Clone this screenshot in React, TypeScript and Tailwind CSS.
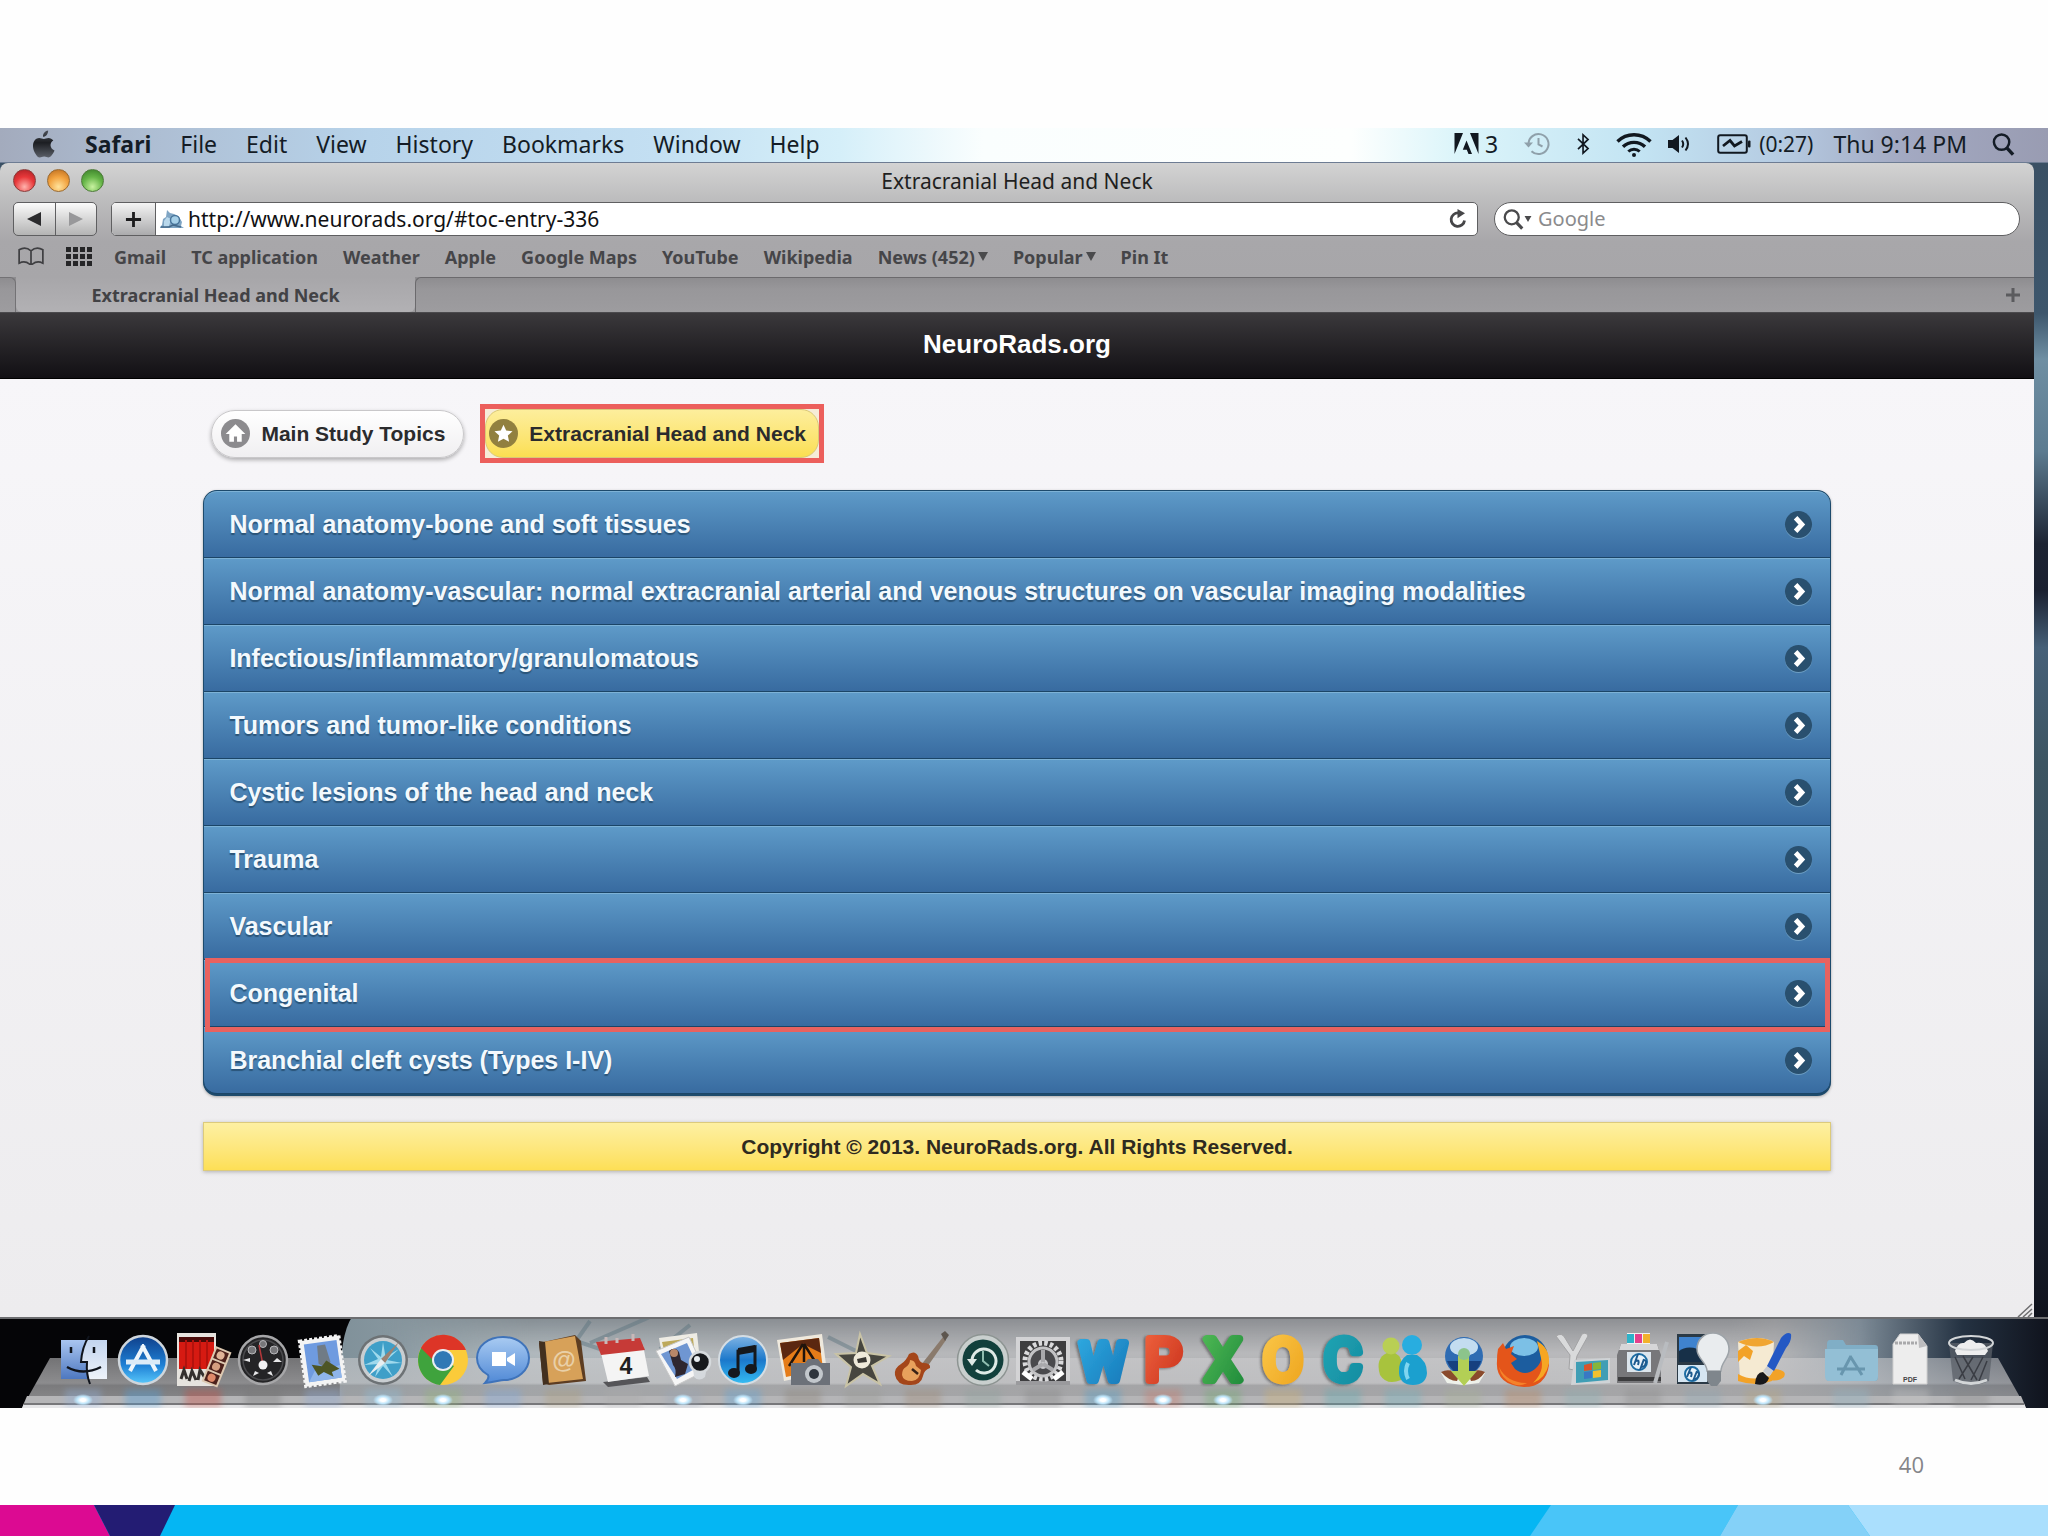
import React from "react";

const menuItems = ["File", "Edit", "View", "History", "Bookmarks", "Window", "Help"];

const bookmarks = [
  { label: "Gmail" },
  { label: "TC application" },
  { label: "Weather" },
  { label: "Apple" },
  { label: "Google Maps" },
  { label: "YouTube" },
  { label: "Wikipedia" },
  { label: "News (452)", menu: true },
  { label: "Popular", menu: true },
  { label: "Pin It" },
];

const topics = [
  "Normal anatomy-bone and soft tissues",
  "Normal anatomy-vascular: normal extracranial arterial and venous structures on vascular imaging modalities",
  "Infectious/inflammatory/granulomatous",
  "Tumors and tumor-like conditions",
  "Cystic lesions of the head and neck",
  "Trauma",
  "Vascular",
  "Congenital",
  "Branchial cleft cysts (Types I-IV)",
];

/* ---------- menu bar ---------- */

function AppleIcon() {
  return (
    <svg viewBox="0 0 24 28" className="h-[28px] w-[25px]" aria-hidden="true">
      <defs>
        <linearGradient id="apple" x1="0" y1="0" x2="0" y2="1">
          <stop offset="0" stopColor="#4c5058" />
          <stop offset=".45" stopColor="#1c1e22" />
          <stop offset="1" stopColor="#5a5f68" />
        </linearGradient>
      </defs>
      <path
        fill="url(#apple)"
        d="M16.6 0.6c.2 1.700-.5 3.200-1.400 4.300-1 1.100-2.400 1.900-3.700 1.800-.2-1.600.6-3.200 1.400-4.200 1-1.100 2.500-1.900 3.700-1.900zM23 20.400c-.6 1.500-.9 2.100-1.700 3.400-1.100 1.700-2.500 3.700-4.300 3.700-1.600 0-2.100-1-4.300-1s-2.800 1-4.400 1c-1.800 0-3.200-1.900-4.200-3.600C1.100 19.300.800 14 2.600 11.200c1.200-2 3.200-3.100 5.100-3.100s3.100 1 4.700 1c1.500 0 2.500-1 4.700-1 1.700 0 3.500.9 4.700 2.500-4.100 2.300-3.500 8.200 1.200 9.800z"
      />
    </svg>
  );
}

function AdobeIcon() {
  return (
    <svg viewBox="0 0 24 22" className="h-[22px] w-[25px]" fill="#111820" aria-hidden="true">
      <path d="M0 0h8.500L0 21zM24 0h-8.500L24 21zM12 7.500L17.500 21H14l-1.700-4.300H8.300z" />
    </svg>
  );
}

function TimeMachineIcon() {
  return (
    <svg viewBox="0 0 28 24" className="h-[24px] w-[28px]" fill="none" stroke="#8fa0aa" strokeWidth="2" aria-hidden="true">
      <path d="M5.500 12a10 10 0 1 1 3 7.200" />
      <path d="M15.500 6v6.500l4 2" />
      <path d="M1 10.500h9l-4.500 5z" fill="#8fa0aa" stroke="none" />
    </svg>
  );
}

function BluetoothIcon() {
  return (
    <svg viewBox="0 0 16 24" className="h-[22px] w-[15px]" fill="none" stroke="#111820" strokeWidth="1.800" aria-hidden="true">
      <path d="M2 6.500l11 10.500-5.500 5V2L13 7 2 17.500" />
    </svg>
  );
}

function WifiIcon() {
  return (
    <svg viewBox="0 0 36 25" className="h-[25px] w-[36px]" fill="none" stroke="#111820" strokeWidth="3.400" aria-hidden="true">
      <path d="M1.500 9.500a23.500 23.500 0 0 1 33 0" />
      <path d="M7 14.800a15.800 15.800 0 0 1 22 0" />
      <path d="M12.300 19.500a8.500 8.500 0 0 1 11.400 0" strokeWidth="3" />
      <circle cx="18" cy="23" r="2" fill="#111820" stroke="none" />
    </svg>
  );
}

function VolumeIcon() {
  return (
    <svg viewBox="0 0 24 20" className="h-[20px] w-[24px]" fill="none" stroke="#111820" strokeWidth="2" aria-hidden="true">
      <path d="M0 6h4.500L11 1v18l-6.500-5H0z" fill="#111820" stroke="none" />
      <path d="M14 6.500q2.500 3.500 0 7M17.500 3.500q5 6.500 0 13" />
    </svg>
  );
}

function BatteryIcon() {
  return (
    <svg viewBox="0 0 34 20" className="h-[20px] w-[34px]" fill="none" stroke="#111820" aria-hidden="true">
      <rect x="1.200" y="1.200" width="28.600" height="17.600" rx="2" strokeWidth="2" />
      <rect x="31" y="6.500" width="2.500" height="7" rx="1" fill="#111820" stroke="none" />
      <path d="M6 12l7-5.500 4.500 5.500L25 7.500" strokeWidth="2.800" />
    </svg>
  );
}

function SearchIcon({ className }: { className: string }) {
  return (
    <svg viewBox="0 0 24 24" className={className} fill="none" stroke="currentColor" strokeWidth="2.600" aria-hidden="true">
      <circle cx="10" cy="9.500" r="8" />
      <path d="M15 15l7 7.500" strokeWidth="3.600" />
    </svg>
  );
}

function MenuBar() {
  return (
    <header className="flex h-[35px] items-center justify-between border-b border-[#6d7c93] bg-[linear-gradient(90deg,#a3abbd_0%,#adbdd2_7%,#b7d3ea_18%,#c3dff2_32%,#d5eff9_41%,#fafefe_48%,#fdfffe_66%,#dcf5fa_71%,#c3e4f3_80%,#b5cbe2_87%,#a3a9c2_93%,#999cb2_100%)] pb-0.5 pl-[31px] pr-[33px] text-[23px] leading-8 text-[#141c26]">
      <nav className="flex items-center gap-[29px]" aria-label="Menu bar">
        <button aria-label="Apple menu">
          <AppleIcon />
        </button>
        <button className="font-bold">Safari</button>
        {menuItems.map((m) => (
          <button key={m}>{m}</button>
        ))}
      </nav>
      <div className="flex items-center gap-[25px]">
        <button className="flex items-center gap-1.5">
          <AdobeIcon />
          <span>3</span>
        </button>
        <TimeMachineIcon />
        <BluetoothIcon />
        <span className="flex items-center gap-4">
          <WifiIcon />
          <VolumeIcon />
        </span>
        <span className="flex items-center gap-5">
          <span className="flex items-center gap-2 text-[21px]">
            <BatteryIcon />
            (0:27)
          </span>
          <time>Thu 9:14 PM</time>
        </span>
        <button aria-label="Spotlight">
          <SearchIcon className="size-[23px]" />
        </button>
      </div>
    </header>
  );
}

/* ---------- browser chrome ---------- */

function Favicon() {
  return (
    <svg viewBox="0 0 24 20" className="h-[20px] w-[24px] shrink-0" aria-hidden="true">
      <path d="M0 18l2-2 1-6 3-2 1-7 3 3 4 1 5 3 3 5-1 4 3 2H0z" fill="#7fa5c4" />
      <path d="M4 12l3-4 4 2-2 7-5 1z" fill="#b9d8ec" />
      <circle cx="15" cy="11" r="4.500" fill="#a7d0e8" stroke="#49759b" strokeWidth="1.500" />
      <path d="M1 18h8l4-2 8 2" stroke="#456a8b" strokeWidth="1.500" fill="none" />
    </svg>
  );
}

function Toolbar() {
  return (
    <div className="flex items-center pl-[13px] pr-[14px]">
      <div className="flex h-[34px] w-[84px] overflow-hidden rounded-[5px] border border-[#5f5f61] bg-gradient-to-b from-[#fbfbfb] to-[#b4b4b4]">
        <button aria-label="Back" className="flex flex-1 items-center justify-center border-r border-[#5f5f61]">
          <svg viewBox="0 0 14 14" className="size-[14px]" aria-hidden="true">
            <path d="M14 0v14L0 7z" fill="#2b2b2d" />
          </svg>
        </button>
        <button aria-label="Forward" className="flex flex-1 items-center justify-center">
          <svg viewBox="0 0 14 14" className="size-[14px]" aria-hidden="true">
            <path d="M0 0v14l14-7z" fill="#98989a" />
          </svg>
        </button>
      </div>
      <div className="ml-[14px] flex h-[34px] flex-1 items-center overflow-hidden rounded-[5px] border border-[#5f5f61] bg-white">
        <button
          aria-label="Add bookmark"
          className="flex h-full w-[44px] items-center justify-center border-r border-[#5f5f61] bg-gradient-to-b from-[#f4f4f4] to-[#ababad]"
        >
          <svg viewBox="0 0 18 18" className="size-[17px]" aria-hidden="true">
            <path d="M9 1v16M1 9h16" stroke="#1c1c1e" strokeWidth="3" />
          </svg>
        </button>
        <div className="flex min-w-0 flex-1 items-center gap-1 pl-1">
          <Favicon />
          <input
            aria-label="Address"
            className="min-w-0 flex-1 bg-transparent text-[21px] leading-8 text-[#111113] outline-none"
            defaultValue="http://www.neurorads.org/#toc-entry-336"
          />
        </div>
        <button aria-label="Reload" className="mr-[10px] text-[#464648]">
          <svg viewBox="0 0 18 20" className="h-[20px] w-[18px]" fill="none" stroke="currentColor" strokeWidth="2.800" aria-hidden="true">
            <path d="M15.500 11.500a6.700 6.700 0 1 1-6-7.500" />
            <path d="M8.500 0l7.500 4.200-7.500 5z" fill="currentColor" stroke="none" />
          </svg>
        </button>
      </div>
      <div className="ml-[16px] flex h-[34px] w-[526px] items-center rounded-full border border-[#5f5f61] bg-white pl-[8px] text-[#4a4a4c]">
        <SearchIcon className="size-[21px]" />
        <svg viewBox="0 0 8 7" className="h-[6px] w-[8px]" aria-hidden="true">
          <path d="M0 0h8L4 7z" fill="currentColor" />
        </svg>
        <input
          aria-label="Search Google"
          className="ml-1.5 min-w-0 flex-1 bg-transparent text-xl leading-8 outline-none placeholder:text-[#8b8b8d]"
          placeholder="Google"
        />
      </div>
    </div>
  );
}

function BookmarksBar() {
  return (
    <nav className="flex h-[41px] items-center pl-[17px] text-lg font-bold text-[#454548]" aria-label="Bookmarks">
      <button aria-label="Show all bookmarks">
        <svg viewBox="0 0 28 20" className="h-[19px] w-[28px]" fill="none" stroke="#3f3f42" strokeWidth="1.800" aria-hidden="true">
          <path d="M14 4Q8-1 1.500 3v14q6-3 11 1h3q5-4 11-1V3Q20-1 14 4zM14 4v14" />
        </svg>
      </button>
      <button aria-label="Top sites" className="ml-[21px] grid grid-cols-4 gap-x-[2px] gap-y-[2px]">
        {Array.from({ length: 12 }, (_, i) => (
          <span key={i} className="h-[5px] w-[5px] bg-[#252527]" />
        ))}
      </button>
      <div className="ml-[22px] flex gap-[25px]">
        {bookmarks.map((b) => (
          <a key={b.label} href="#bookmark" className="flex items-center gap-[3px]">
            {b.label}
            {b.menu && (
              <svg viewBox="0 0 10 9" className="h-[9px] w-[10px]" aria-hidden="true">
                <path d="M0 0h10L5 9z" fill="#4a4a4c" />
              </svg>
            )}
          </a>
        ))}
      </div>
    </nav>
  );
}

function TabBar() {
  return (
    <div className="flex h-[35px] bg-[linear-gradient(180deg,#8d8c8f_0%,#98979a_35%,#9d9c9f_100%)]">
      <div className="w-[16px] rounded-tr-[6px] border-r border-t border-[#737275]" />
      <button className="w-[399px] rounded-b-[6px] bg-gradient-to-b from-[#a7a6a9] to-[#b2b1b4] text-lg font-bold text-[#424245]">
        Extracranial Head and Neck
      </button>
      <div className="flex flex-1 items-center justify-end rounded-tl-[6px] border-l border-t border-[#6b6a6d] pr-[14px]">
        <button aria-label="New tab">
          <svg viewBox="0 0 14 14" className="size-[14px]" aria-hidden="true">
            <path d="M7 0v14M0 7h14" stroke="#5b5b5e" strokeWidth="3" />
          </svg>
        </button>
      </div>
    </div>
  );
}

/* ---------- web page ---------- */

function Site() {
  return (
    <div className="font-['Liberation_Sans',Arial,sans-serif] font-bold">
      <div className="flex h-[67px] items-center justify-center border-b border-t border-t-[#4b4a4d] border-b-black bg-gradient-to-b from-[#3b393c] to-[#121014]">
        <h1 className="pb-1 text-[26px] leading-8 text-white">NeuroRads.org</h1>
      </div>
      <main className="relative min-h-[938px] bg-gradient-to-b from-[#f7f6f9] to-[#edecee] px-[10%] pt-[25px]">
        <div className="flex items-center gap-[16px] pl-2 text-[21px] text-[#2b2b2d]">
          <button className="flex h-[48px] items-center gap-[11px] rounded-full border border-[#c9c8ca] bg-gradient-to-b from-white to-[#f0eff1] pl-[9px] pr-[18px] shadow-[0_2px_4px_rgba(0,0,0,0.3)]">
            <svg viewBox="0 0 28 28" className="size-[29px]" aria-hidden="true">
              <circle cx="14" cy="14" r="14" fill="#8c8b8e" />
              <path d="M14 5L4.500 14.500H8V22h4.500v-5h3v5H20v-7.500h3.500z" fill="#fff" />
            </svg>
            Main Study Topics
          </button>
          <div className="border-[5px] border-[#ec5f5c] bg-[#f6ecd8]">
            <button className="flex h-[49px] items-center gap-[11px] rounded-[18px] border border-[#d9c878] bg-gradient-to-b from-[#fdee9c] to-[#fbdf50] pl-[3px] pr-[12px]">
              <svg viewBox="0 0 28 28" className="size-[29px]" aria-hidden="true">
                <circle cx="14" cy="14" r="14" fill="#91803f" />
                <path d="M14 5.500l2.600 5.600 6.100.7-4.500 4.200 1.200 6-5.400-3-5.400 3 1.200-6-4.500-4.200 6.100-.7z" fill="#fff" />
              </svg>
              Extracranial Head and Neck
            </button>
          </div>
        </div>
        <ul className="mt-[27px] rounded-[14px] border border-b-2 border-[#1d4a6c] bg-[#1d4a6c] text-[25px] text-[#f3f9fd] shadow-[0_1px_3px_rgba(0,0,0,0.3)]">
          {topics.map((t) => (
            <li key={t} className="group relative">
              <a
                href="#topic"
                className="flex h-[67px] items-center justify-between border-b border-t border-b-[#1b4567] border-t-[#7db2d6] bg-gradient-to-b from-[#5e9ac8] to-[#386ba0] pl-[25px] pr-[17px] text-shadow-[0_2px_1px_#2a5478] group-first:rounded-t-[13px] group-last:rounded-b-[13px]"
              >
                <span>{t}</span>
                <svg viewBox="0 0 30 30" className="size-[29px]" aria-hidden="true">
                  <circle cx="15" cy="16" r="14" fill="#6d9ec3" />
                  <circle cx="15" cy="15" r="14" fill="#29506f" />
                  <path d="M12 8l6.500 7-6.500 7" fill="none" stroke="#fff" strokeWidth="5" />
                </svg>
              </a>
              {t === "Congenital" && (
                <span className="pointer-events-none absolute -bottom-[5px] -top-[2px] left-[1px] right-0 z-10 border-[5px] border-[#e8625f]" />
              )}
            </li>
          ))}
        </ul>
        <footer className="mt-[26px] flex h-[49px] items-center justify-center border border-[#dcca7c] bg-gradient-to-b from-[#fdf0a2] to-[#fddf55] text-[21px] text-[#2e2a20] shadow-[0_1px_4px_rgba(0,0,0,0.25)]">
          Copyright © 2013. NeuroRads.org. All Rights Reserved.
        </footer>
        <svg viewBox="0 0 16 14" className="absolute bottom-0 right-0 h-[14px] w-[18px]" aria-hidden="true">
          <path d="M1 14L15 1M6 14l9-8M11 14l4-4" stroke="#6e6e70" strokeWidth="1.500" />
        </svg>
      </main>
    </div>
  );
}

/* ---------- dock ---------- */

const letterStyle = { fontFamily: "'Liberation Sans', Arial, sans-serif", fontWeight: 700 } as const;
const roundStyle = { fontFamily: "Roboto, 'Liberation Sans', sans-serif", fontWeight: 400 } as const;

function Letter({ ch, from, to, size = 58 }: { ch: string; from: string; to: string; size?: number }) {
  const id = "letter" + ch;
  return (
    <>
      <defs>
        <linearGradient id={id} x1="0" y1="0" x2="1" y2="1">
          <stop offset="0" stopColor={from} />
          <stop offset="1" stopColor={to} />
        </linearGradient>
        <filter id={id + "s"} x="-20%" y="-20%" width="140%" height="140%">
          <feDropShadow dx="-2" dy="1" stdDeviation="1" floodColor="#333333" floodOpacity=".5" />
        </filter>
      </defs>
      <text
        x="30"
        y="51"
        textAnchor="middle"
        fontSize={size}
        style={roundStyle}
        fill={`url(#${id})`}
        stroke={`url(#${id})`}
        strokeWidth="8"
        strokeLinejoin="round"
        filter={`url(#${id}s)`}
      >
        {ch}
      </text>
    </>
  );
}

function Hp({ x, y, r }: { x: number; y: number; r: number }) {
  return (
    <>
      <circle cx={x} cy={y} r={r} fill="#e9f3fa" stroke="#1d6da3" strokeWidth="2" />
      <path d={`M${x - 1} ${y - r}l-4 ${r + 3}m2-4q4-2 2 4M${x + 5} ${y - 3}l-4 ${r + 3}m3-${r + 2}q5 0 2 5q-2 3-4 1`} fill="none" stroke="#1d5a8e" strokeWidth="2" />
    </>
  );
}

type DockItem = { name: string; tint: string; running?: boolean; art: React.ReactNode };

const apps: DockItem[] = [
  {
    name: "Finder",
    tint: "bg-[#8fb0dd]",
    running: true,
    art: (
      <>
        <defs>
          <linearGradient id="fl" x1="0" y1="0" x2="0" y2="1">
            <stop offset="0" stopColor="#a9c5f0" />
            <stop offset="1" stopColor="#4e78c0" />
          </linearGradient>
          <linearGradient id="fr" x1="0" y1="0" x2="0" y2="1">
            <stop offset="0" stopColor="#c3d5ef" />
            <stop offset="1" stopColor="#eef3fa" />
          </linearGradient>
        </defs>
        <rect x="8" y="11" width="46" height="39" fill="url(#fr)" />
        <path d="M8 11h26q-6 12-6 22h6q0 8 1 17H8z" fill="url(#fl)" />
        <path d="M36 7Q29 18 28 33h6q-1 12 3 22" fill="none" stroke="#10141c" strokeWidth="2" />
        <path d="M14 38q16 9 34 0M18 18v6M41 18v6" fill="none" stroke="#10141c" strokeWidth="2.500" />
      </>
    ),
  },
  {
    name: "App Store",
    tint: "bg-[#4aa0e0]",
    art: (
      <>
        <defs>
          <linearGradient id="as" x1="0" y1="0" x2="0" y2="1">
            <stop offset="0" stopColor="#0f3f8a" />
            <stop offset=".6" stopColor="#1e7fd4" />
            <stop offset="1" stopColor="#58c8fb" />
          </linearGradient>
        </defs>
        <circle cx="30" cy="31" r="24" fill="url(#as)" stroke="#cfd6dc" strokeWidth="2.500" />
        <path d="M31 16L17 42M29 16l14 26" stroke="#eef6fc" strokeWidth="4" />
        <path d="M13 33h34" stroke="#dcebf7" strokeWidth="5" />
      </>
    ),
  },
  {
    name: "Photo Booth",
    tint: "bg-[#d0483c]",
    art: (
      <>
        <rect x="4" y="4" width="39" height="53" fill="#e6e3de" />
        <path d="M6 8h35v32H6z" fill="#d61a12" />
        <path d="M6 8h35v5H6z" fill="#4a0a08" />
        <path d="M13 11v28M20 11v28M27 11v28M34 11v28" stroke="#b3120d" strokeWidth="2" />
        <path d="M8 50l3-9 3 9M16 52l3-10 4 9M25 51l2-10 5 8" stroke="#34302e" strokeWidth="3" fill="none" />
        <g transform="rotate(22 44 38)">
          <rect x="35" y="19" width="17" height="38" fill="#ddc8b0" />
          <path d="M37 21h13v10H37zM37 33h13v10H37zM37 45h13v10H37z" fill="#4d211b" />
          <circle cx="43" cy="26" r="4" fill="#e0b397" />
          <circle cx="43" cy="38" r="4" fill="#d59f80" />
          <circle cx="43" cy="50" r="4" fill="#e08a6a" />
        </g>
      </>
    ),
  },
  {
    name: "Dashboard",
    tint: "bg-[#777777]",
    art: (
      <>
        <circle cx="30" cy="31" r="24" fill="#242426" stroke="#a6a6a8" strokeWidth="2.500" />
        <circle cx="30" cy="31" r="20" fill="none" stroke="#4a4a4d" strokeWidth="1.500" />
        <g fill="#77777a" stroke="#b7b7ba" strokeWidth="1">
          <circle cx="19" cy="21" r="4" />
          <circle cx="41" cy="21" r="4" />
          <circle cx="30" cy="15" r="3.500" />
        </g>
        <path d="M10 31l7-2v4zM20 47l2-5 4 2zM40 47l-2-5-4 2zM40 33l4-4 5 4z" fill="#e6e6e8" />
        <path d="M30 36l-4-20" stroke="#b3373a" strokeWidth="1.500" />
        <circle cx="30" cy="36" r="4.500" fill="#f2f2f4" />
      </>
    ),
  },
  {
    name: "Mail",
    tint: "bg-[#8da9d6]",
    art: (
      <g transform="rotate(-8 30 30)">
        <rect x="9" y="9" width="40" height="46" fill="#f4f4f4" stroke="#f4f4f4" strokeWidth="3" strokeDasharray="3 2" />
        <rect x="13" y="13" width="33" height="38" fill="#6f9be0" />
        <path d="M13 51l9-13 12 3 12-3v13z" fill="#8fb5ea" />
        <path d="M26 16h8l3 18-5 6-7-6z" fill="#707b86" />
        <path d="M18 34l10 3 5-5 12 10-8 2 1 5-9-6-6 3z" fill="#4d5524" />
      </g>
    ),
  },
  {
    name: "Safari",
    tint: "bg-[#8cbcd8]",
    running: true,
    art: (
      <>
        <circle cx="30" cy="31" r="25" fill="#6d7275" />
        <circle cx="30" cy="31" r="22.500" fill="#c9ced1" />
        <circle cx="30" cy="31" r="19" fill="#3f9fc8" />
        <path d="M30 13l2.500 15L46 20 34 31l15 3-16 1 7 13-10-11-8 11 4-13-15 1 14-6-8-11 11 9z" fill="#9fd9ec" />
        <path d="M46 13L32 34l-4-4z" fill="#9a8274" />
        <path d="M15 47l13-17 4 4z" fill="#e8eef0" />
      </>
    ),
  },
  {
    name: "Chrome",
    tint: "bg-[#93b878]",
    running: true,
    art: (
      <>
        <circle cx="30" cy="31" r="25" fill="#fbcb3a" />
        <path d="M30 31L8.500 18.500A25 25 0 0 0 27 56L41 37z" fill="#3fa33d" />
        <path d="M8 19A25 25 0 0 1 53 21H30q-8 1-11 9z" fill="#dd3527" />
        <circle cx="30" cy="31" r="11" fill="#e9eef2" />
        <circle cx="30" cy="31" r="9" fill="#2f79b5" />
      </>
    ),
  },
  {
    name: "iChat",
    tint: "bg-[#7fa9e0]",
    art: (
      <>
        <defs>
          <linearGradient id="ic" x1="0" y1="0" x2="0" y2="1">
            <stop offset="0" stopColor="#a9cbf2" />
            <stop offset="1" stopColor="#5089d6" />
          </linearGradient>
        </defs>
        <path d="M30 8c15 0 26 9 26 21S45 51 31 51c-4 0-9 2-19 3 3-3 4-6 3-8C8 42 4 36 4 29 4 17 15 8 30 8z" fill="url(#ic)" stroke="#3f73ba" strokeWidth="2" />
        <path d="M19 23h14v14H19zM34 29l8-5v13l-8-5z" fill="#fff" />
      </>
    ),
  },
  {
    name: "Address Book",
    tint: "bg-[#b0a07c]",
    art: (
      <>
        <path d="M6 14l36-8 6 6 5 40-37 4-6-2z" fill="#5d3d22" />
        <path d="M10 13l32-6 8 43-36 4z" fill="#d7a159" />
        <path d="M6 12l6 1 4 42-6 1z" fill="#43301f" />
        <text x="31" y="39" textAnchor="middle" fontSize="24" style={letterStyle} fill="#e9d0a8">@</text>
      </>
    ),
  },
  {
    name: "iCal",
    tint: "bg-[#aaaaaa]",
    art: (
      <>
        <path d="M10 53l44-5 3 5-42 5z" fill="#555558" />
        <path d="M7 20l43-4 6 31-41 6z" fill="#f4f4f4" />
        <path d="M3 13l44-4 5 12-44 5z" fill="#c63a37" />
        <path d="M13 8v7M40 5v7M24 9v5" stroke="#c9b8b8" strokeWidth="3" />
        <text x="33" y="45" textAnchor="middle" fontSize="23" style={letterStyle} fill="#1f1f21">4</text>
      </>
    ),
  },
  {
    name: "Preview",
    tint: "bg-[#9aa7b8]",
    running: true,
    art: (
      <>
        <path d="M6 9l38-5 3 28-36 6z" fill="#eeece4" />
        <path d="M9 13l31-4 1 10-28 10z" fill="#bda95a" />
        <path d="M3 22l33-14 16 34-30 15z" fill="#f6f6f6" stroke="#c8c8c8" />
        <path d="M8 25l26-11 11 24-21 12z" fill="#6f96d2" />
        <path d="M16 22q6-5 10 1l2 8 7 4-3 10-10 3q2-8-2-12z" fill="#2f2730" />
        <circle cx="21" cy="24" r="4" fill="#b88769" />
        <path d="M40 38h14l-2 10q-6 5-11 0z" fill="#d5d9dd" />
        <circle cx="47" cy="33" r="10" fill="#17191c" stroke="#d6dadd" strokeWidth="2.500" />
        <circle cx="44" cy="30" r="3" fill="#e6ebee" />
      </>
    ),
  },
  {
    name: "iTunes",
    tint: "bg-[#5ea7dd]",
    running: true,
    art: (
      <>
        <defs>
          <linearGradient id="it" x1="0" y1="0" x2="0" y2="1">
            <stop offset="0" stopColor="#7fb4e4" />
            <stop offset=".5" stopColor="#1b78cb" />
            <stop offset="1" stopColor="#35bdf3" />
          </linearGradient>
        </defs>
        <circle cx="30" cy="31" r="24" fill="url(#it)" stroke="#d5dde3" strokeWidth="2" />
        <path d="M25 44V22l17-4v22" fill="none" stroke="#15181d" strokeWidth="3" />
        <path d="M25 19l17-3v7l-17 3z" fill="#15181d" />
        <ellipse cx="21" cy="44" rx="6" ry="5" fill="#15181d" />
        <ellipse cx="38" cy="40" rx="6" ry="5" fill="#15181d" />
      </>
    ),
  },
  {
    name: "iPhoto",
    tint: "bg-[#8d8478]",
    art: (
      <>
        <path d="M4 11l45-6 5 38-43 9z" fill="#efe9dd" />
        <path d="M7 14l39-5 4 31-37 8z" fill="#e57c18" />
        <path d="M7 14l39-5 2 15-18-9-20 16z" fill="#5b2710" />
        <path d="M30 15l-14 22M31 15l12 19M31 15v18" stroke="#20140c" strokeWidth="2.500" />
        <path d="M18 34h14l3-4h10l3 4h9v22H18z" fill="#6c7179" />
        <circle cx="41" cy="45" r="9" fill="#c2c7cc" />
        <circle cx="41" cy="45" r="5" fill="#2e343c" />
      </>
    ),
  },
  {
    name: "iMovie",
    tint: "bg-[#9a9a94]",
    art: (
      <>
        <path d="M27 5l7 19 22 3-17 10 8 18-17-10-17 12 5-19L3 25l20-1z" fill="#47463f" stroke="#c9c3a6" strokeWidth="2" />
        <circle cx="29" cy="31" r="8.500" fill="#efeada" />
        <path d="M24 30l9-2 1 5-9 1z" fill="#3a3833" />
      </>
    ),
  },
  {
    name: "GarageBand",
    tint: "bg-[#a18a74]",
    art: (
      <>
        <path d="M28 36L50 8l3 3-21 30z" fill="#8a7a6c" />
        <path d="M48 5l4-3 4 4-4 6z" fill="#5d564f" />
        <path d="M16 25q6-4 9 2 1 6 5 7 8 0 7 5-6 2-7 8-2 9-12 9-14 1-16-10-1-7 6-11 5-3 8-10z" fill="#a4461a" />
        <path d="M17 31q5 0 6 6l5 4q-1 10-9 11-9 0-10-6 0-6 4-8 4-3 4-7z" fill="#e8a15c" />
        <path d="M19 40l6 5" stroke="#3a2216" strokeWidth="2.500" />
      </>
    ),
  },
  {
    name: "Time Machine",
    tint: "bg-[#8fa39d]",
    art: (
      <>
        <circle cx="30" cy="31" r="25.500" fill="#c9cfce" stroke="#8d9492" strokeWidth="1.500" />
        <circle cx="30" cy="31" r="20.500" fill="#12403c" />
        <path d="M19 33a12 12 0 1 1 4 8" fill="none" stroke="#dfeae6" strokeWidth="3" />
        <path d="M14 30h10l-5 7z" fill="#dfeae6" />
        <path d="M30 22v10l6 5" fill="none" stroke="#8fbdb0" strokeWidth="2" />
      </>
    ),
  },
  {
    name: "System Preferences",
    tint: "bg-[#888888]",
    art: (
      <>
        <rect x="5" y="10" width="50" height="44" fill="#3d3d3f" stroke="#d3d3d5" strokeWidth="4" />
        <path d="M3 52h54v4H3z" fill="#9a9a9d" />
        <circle cx="30" cy="32" r="18" fill="none" stroke="#dadadc" strokeWidth="5" strokeDasharray="3.500 2.200" />
        <circle cx="30" cy="33" r="14" fill="#4a4a4d" stroke="#c3c3c5" strokeWidth="3" />
        <circle cx="30" cy="35" r="5" fill="#c9c9cc" />
        <path d="M30 33V21M30 35l-10 6M30 35l10 6" stroke="#a9a9ac" strokeWidth="4" />
        <path d="M10 43l9 7M50 43l-9 7" stroke="#fff" strokeWidth="5" />
      </>
    ),
  },
  { name: "Word", tint: "bg-[#4ea0cc]", running: true, art: <Letter ch="W" from="#2fa9e0" to="#1577b8" size={52} /> },
  { name: "PowerPoint", tint: "bg-[#cc7766]", running: true, art: <Letter ch="P" from="#f0643e" to="#c8301c" /> },
  { name: "Excel", tint: "bg-[#6fae70]", running: true, art: <Letter ch="X" from="#4fb955" to="#1f8a3a" /> },
  { name: "Outlook", tint: "bg-[#cfb070]", art: <Letter ch="O" from="#fbc84a" to="#eda31c" /> },
  { name: "Communicator", tint: "bg-[#5faeb5]", art: <Letter ch="C" from="#22a5b4" to="#138ba0" /> },
  {
    name: "Messenger",
    tint: "bg-[#6fb3c0]",
    art: (
      <>
        <path d="M7 46q-5-17 7-22h8q8 4 7 16l-1 11q-14 6-21-5z" fill="#a8c33d" />
        <circle cx="18" cy="17" r="8.500" fill="#b9cf54" />
        <path d="M26 44q-1-12 8-18h10q10 6 10 18-1 12-14 12T26 44z" fill="#1ba0cf" />
        <circle cx="39" cy="16" r="10" fill="#28ade0" />
        <path d="M35 34q-4 8 0 16" stroke="#7fd6f0" strokeWidth="4" fill="none" />
      </>
    ),
  },
  {
    name: "Remote Desktop",
    tint: "bg-[#a7b193]",
    art: (
      <>
        <circle cx="31" cy="27" r="19" fill="#2f6cb3" />
        <ellipse cx="31" cy="18" rx="14" ry="9" fill="#c3dcf0" />
        <path d="M14 32q4 12 17 14 14-2 17-14z" fill="#17407f" />
        <path d="M8 44q10-6 22 4 12-10 22-4l-6 10-16 2-16-2z" fill="#eef1ea" />
        <path d="M8 43q10-5 18 4l-2 5q-8 0-16-9zM52 43q-10-5-16 4l2 5q8 0 14-9z" fill="#8a4a2c" />
        <path d="M25 27h11v15h8L31 57 18 42h7z" fill="#b3cf55" />
        <circle cx="31" cy="25" r="6" fill="#8cc48b" />
      </>
    ),
  },
  {
    name: "Firefox",
    tint: "bg-[#c08a60]",
    art: (
      <>
        <circle cx="32" cy="29" r="23" fill="#1c5d9f" />
        <ellipse cx="31" cy="18" rx="14" ry="9" fill="#7cc0e6" />
        <path d="M5 20l5-6 3 6 8-3-3 8 6 5-6 4 4 6q10 8 20 0 8-6 6-18 7 4 8 14-3 22-25 22Q2 56 4 32q0-7 1-12z" fill="#e4551a" />
        <path d="M44 12q13 7 12 22-3 15-16 20 12-12 8-25z" fill="#f6a623" />
        <path d="M6 38q8 16 28 16-6 4-14 1Q8 50 6 38z" fill="#f5822a" />
      </>
    ),
  },
  {
    name: "CrossOver",
    tint: "bg-[#8ab0b4]",
    art: (
      <>
        <path d="M3 7q6-4 9 2l8 13 9-17q5-2 6 2L24 27l-3 14-5-1 1-14z" fill="#d9dadb" stroke="#a3a3a5" />
        <path d="M21 31l36-2v25l-39 2z" fill="#cfd3d6" />
        <path d="M23 33l32-2v20l-32 3z" fill="#3f9eb5" />
        <path d="M31 36l8-2v7l-8 1z" fill="#d9542b" />
        <path d="M40 34l8-1v7l-8 1z" fill="#86b53a" />
        <path d="M31 43l8-1v7l-8 1z" fill="#3978c4" />
        <path d="M40 42l8-1v7l-8 1z" fill="#f1c02e" />
      </>
    ),
  },
  {
    name: "HP Utility",
    tint: "bg-[#8d8d8d]",
    art: (
      <>
        <path d="M14 4h23v12H14z" fill="#f2f2f2" />
        <path d="M14 5h7v9h-7z" fill="#2eb2c9" />
        <path d="M22 5h7v9h-7z" fill="#e4418d" />
        <path d="M30 5h7v9h-7z" fill="#f2b12c" />
        <path d="M8 15h36l4 11v28H4V26z" fill="#77777a" />
        <path d="M8 15h36l2 6H6z" fill="#d6d6d8" />
        <path d="M5 48h43v4H5z" fill="#3c3c3e" />
        <rect x="14" y="23" width="24" height="20" fill="#dce5ec" />
        <Hp x={26} y={33} r={8} />
        <path d="M54 13L42 54" stroke="#b9bcc0" strokeWidth="4" />
      </>
    ),
  },
  {
    name: "HP Scan",
    tint: "bg-[#8ea7b4]",
    art: (
      <>
        <rect x="4" y="5" width="33" height="50" fill="#2b3a46" />
        <rect x="6" y="8" width="28" height="25" fill="#3f83cf" />
        <path d="M6 22q10-8 28 2v9H6z" fill="#173048" />
        <rect x="5" y="36" width="29" height="17" fill="#d6e6f2" />
        <Hp x={19} y={45} r={7} />
        <path d="M40 4c10 0 16 8 16 16 0 10-8 13-8 22H34c0-9-10-12-10-22C24 11 31 4 40 4z" fill="#e9ecee" stroke="#9da3a8" strokeWidth="1.500" />
        <path d="M34 42h14v10l-4 5h-6l-4-5z" fill="#7f868c" />
      </>
    ),
  },
  {
    name: "Paint",
    tint: "bg-[#b7a67f]",
    running: true,
    art: (
      <>
        <path d="M5 13q20-8 36 0l-2 38q-16 7-32 0z" fill="#f5ead2" />
        <path d="M5 13q20-8 36 0-16 9-36 0z" fill="#f0a531" />
        <path d="M5 22l8-6 7 6-3 9-6-4-6 6zM5 45q16 9 34 0v7q-16 6-34 0zM39 40q16 0 12 8-6 5-14 3z" fill="#f2a227" />
        <path d="M22 55q1-12 8-12l6 6q-3 9-14 6z" fill="#18181a" />
        <path d="M30 42l5-6 6 5-5 7z" fill="#c7cbd0" />
        <path d="M34 37L48 9q6-7 10-4 1 7-5 14L41 42z" fill="#2458c4" />
      </>
    ),
  },
];

const stacks: DockItem[] = [
  {
    name: "Applications",
    tint: "bg-[#8fb3c4]",
    art: (
      <>
        <path d="M6 15q0-4 3-4h13l3 5h29q3 0 3 3v29q0 4-3 4H8q-3 0-3-4z" fill="#80aec6" />
        <path d="M4 20h53v27q0 5-4 5H8q-4 0-4-5z" fill="#93bfd5" />
        <path d="M30 27L20 46M29 27l12 19M16 40h28" stroke="#6896ae" strokeWidth="3" />
      </>
    ),
  },
  {
    name: "PDF document",
    tint: "bg-[#c9c9c9]",
    art: (
      <>
        <path d="M12 15l7-10h18l9 12v38H12z" fill="#ededed" stroke="#cfcfcf" />
        <path d="M37 5l9 12-8 2z" fill="#bdbdbf" />
        <path d="M14 14h22" stroke="#a9a9ab" strokeWidth="3" strokeDasharray="3 1" />
        <text x="29" y="53" textAnchor="middle" fontSize="7" style={letterStyle} fill="#444446">PDF</text>
      </>
    ),
  },
  {
    name: "Trash",
    tint: "bg-[#8a8a8a]",
    art: (
      <>
        <path d="M8 14l4 38q18 8 36 0l4-38z" fill="#5b6068" fillOpacity=".75" />
        <path d="M14 22q3-9 9-8 6-7 12 0 9-2 12 8l-3 4H16z" fill="#eeeeee" />
        <path d="M14 28l10 22M22 27l14 24M32 28l-14 22M42 28L30 51M46 32l-8 20" stroke="#3a3d44" strokeWidth="1.500" />
        <ellipse cx="30" cy="14" rx="22" ry="7" fill="none" stroke="#d3d6d8" strokeWidth="2" />
        <path d="M14 51q16 7 32 0" stroke="#d3d6d8" strokeWidth="3" fill="none" />
      </>
    ),
  },
];

function DockCell({ item }: { item: DockItem }) {
  return (
    <button aria-label={item.name} className="relative w-[60px] shrink">
      <svg viewBox="0 0 60 60" className="relative z-10 block h-[60px] w-full overflow-visible" aria-hidden="true">
        {item.art}
      </svg>
      <span className={`mx-auto block h-[18px] w-[36px] opacity-35 blur-[3px] ${item.tint}`} />
      {item.running && (
        <span className="absolute bottom-0.5 left-1/2 h-[12px] w-[20px] -translate-x-1/2 rounded-full bg-[radial-gradient(closest-side,#ffffff_25%,#bfe6fb_60%,transparent)]" />
      )}
    </button>
  );
}

function Dock() {
  return (
    <footer className="relative h-[91px] overflow-hidden">
      <svg viewBox="0 0 2048 91" preserveAspectRatio="none" className="absolute inset-0 h-full w-full" aria-hidden="true">
        <defs>
          <linearGradient id="desk" x1="0" y1="0" x2="1" y2="0">
            <stop offset="0" stopColor="#80919a" />
            <stop offset=".12" stopColor="#98a6ac" />
            <stop offset=".3" stopColor="#a2a4a7" />
            <stop offset=".84" stopColor="#a8a8aa" />
            <stop offset=".89" stopColor="#7d8b97" />
            <stop offset=".95" stopColor="#243242" />
            <stop offset="1" stopColor="#10131d" />
          </linearGradient>
          <linearGradient id="fade" x1="0" y1="0" x2="0" y2="1">
            <stop offset="0" stopColor="#70747a" stopOpacity=".5" />
            <stop offset=".4" stopColor="#d0d0d2" stopOpacity=".45" />
            <stop offset="1" stopColor="#b0b0b2" stopOpacity=".2" />
          </linearGradient>
          <linearGradient id="fadeMask" x1="0" y1="0" x2="1" y2="0">
            <stop offset="0" stopColor="#000" />
            <stop offset=".1" stopColor="#fff" />
            <stop offset=".9" stopColor="#fff" />
            <stop offset="1" stopColor="#000" />
          </linearGradient>
          <mask id="edges">
            <rect x="380" width="1500" height="91" fill="url(#fadeMask)" />
          </mask>
          <linearGradient id="shelf" x1="0" y1="0" x2="0" y2="1">
            <stop offset="0" stopColor="#cdcdcf" stopOpacity=".55" />
            <stop offset=".5" stopColor="#c6c6c8" stopOpacity=".7" />
            <stop offset=".55" stopColor="#a2a2a4" stopOpacity=".75" />
            <stop offset="1" stopColor="#a6a6a8" stopOpacity=".85" />
          </linearGradient>
        </defs>
        <rect width="2048" height="91" fill="#050507" />
        <path d="M352 0Q338 20 340 91H2048V0z" fill="url(#desk)" />
        <rect x="380" width="1500" height="91" fill="url(#fade)" mask="url(#edges)" />
        <path d="M590 4l-14 20 24 8M650 0l-60 26M690 8l-30 24M828 20l40 20" fill="none" stroke="#58707c" strokeWidth="4" strokeOpacity=".45" />
        <path d="M50 41H1998L2026 91H22z" fill="url(#shelf)" />
        <path d="M27 79H2021L2024 86H24z" fill="#b5b5b7" />
        <path d="M24 86H2024L2026 91H22z" fill="#e6e6e8" />
        <path d="M24 87H2024" stroke="#77777a" strokeWidth="2" />
        <rect width="2048" height="2" fill="#6c6d70" />
      </svg>
      <div className="relative flex h-full justify-center pl-[6px] pt-[11px]">
        {apps.map((a) => (
          <DockCell key={a.name} item={a} />
        ))}
        <div className="w-[28px]" />
        {stacks.map((a) => (
          <DockCell key={a.name} item={a} />
        ))}
      </div>
    </footer>
  );
}

export default function App() {
  return (
    <div className="overflow-hidden bg-[#fefefe] pt-[128px] font-['Noto_Sans','Open_Sans',sans-serif]">
      <MenuBar />
      <div className="bg-[linear-gradient(180deg,#3a5064_0%,#3d566c_13%,#6f8fa3_17%,#5c7b90_25%,#1d2433_33%,#1a2030_37%,#466078_42%,#3d5562_52%,#33485a_70%,#1b2434_85%,#10131d_100%)]">
        <div className="mr-[14px] overflow-hidden rounded-t-[8px] bg-[linear-gradient(180deg,#d3d3d3_0px,#bcbcbd_38px,#a8a7aa_78px,#a7a6a9_114px)]">
          <div className="relative flex h-[39px] items-center justify-center">
            <div className="absolute left-[13px] top-[6px] flex gap-[11px]">
              <button aria-label="Close" className="size-[23px] rounded-full border border-[#8a3a38] bg-[radial-gradient(circle_at_50%_80%,#ffb3ad_0%,#e8383a_50%,#a51d22_100%)]" />
              <button aria-label="Minimize" className="size-[23px] rounded-full border border-[#99692f] bg-[radial-gradient(circle_at_50%_80%,#ffe39c_0%,#f2a340_50%,#b8681c_100%)]" />
              <button aria-label="Zoom" className="size-[23px] rounded-full border border-[#4c7a38] bg-[radial-gradient(circle_at_50%_80%,#c8f2a0_0%,#66b548_50%,#357a26_100%)]" />
            </div>
            <h2 className="pb-1 text-[21px] leading-7 text-[#1f1f21]">Extracranial Head and Neck</h2>
          </div>
          <Toolbar />
          <BookmarksBar />
          <TabBar />
          <Site />
        </div>
      </div>
      <Dock />
      <p className="flex h-[97px] items-center justify-end pb-1.5 pr-[124px] pt-5 font-['Open_Sans',sans-serif] text-[22px] leading-8 text-[#858589]">40</p>
      <svg viewBox="0 0 2048 31" preserveAspectRatio="none" className="block h-[31px] w-full" aria-hidden="true">
        <rect width="2048" height="31" fill="#05b6f3" />
        <path d="M0 0h94l16 31H0z" fill="#dc0a92" />
        <path d="M94 0h81l-15 31h-50z" fill="#231c73" />
        <path d="M1551 0h187l-18 31h-190z" fill="#49c5f8" />
        <path d="M1738 0h110l22 31h-150z" fill="#84d1f8" />
        <path d="M1848 0h200v31h-178z" fill="#aadffd" />
      </svg>
    </div>
  );
}
